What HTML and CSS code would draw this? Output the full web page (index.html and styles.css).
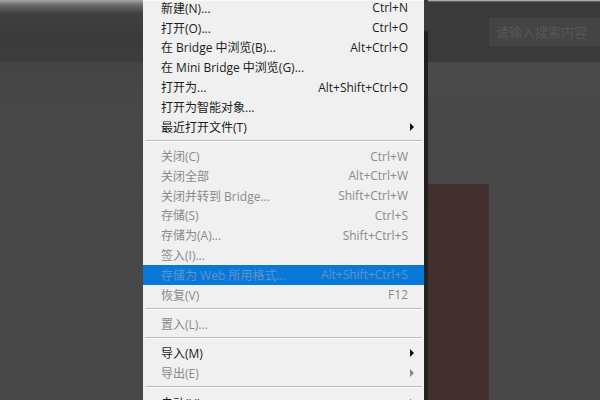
FILE: index.html
```html
<!DOCTYPE html>
<html lang="zh-CN">
<head>
<meta charset="utf-8">
<link rel="stylesheet" href="styles.css">
</head>
<body>
<div class="screen">
  <div class="left-pane">
    <div class="left-top"></div>
    <div class="left-rest"></div>
  </div>
  <div class="menu">
    <div class="menu-list">
      <div class="item"><span class="label">新建(N)...</span><span class="key">Ctrl+N</span></div>
      <div class="item"><span class="label">打开(O)...</span><span class="key">Ctrl+O</span></div>
      <div class="item"><span class="label">在 Bridge 中浏览(B)...</span><span class="key">Alt+Ctrl+O</span></div>
      <div class="item"><span class="label">在 Mini Bridge 中浏览(G)...</span><span class="key"></span></div>
      <div class="item"><span class="label">打开为...</span><span class="key">Alt+Shift+Ctrl+O</span></div>
      <div class="item"><span class="label">打开为智能对象...</span><span class="key"></span></div>
      <div class="item"><span class="label">最近打开文件(T)</span><span class="arrow"></span></div>
      <div class="sep"></div>
      <div class="item off"><span class="label">关闭(C)</span><span class="key">Ctrl+W</span></div>
      <div class="item off"><span class="label">关闭全部</span><span class="key">Alt+Ctrl+W</span></div>
      <div class="item off"><span class="label">关闭并转到 Bridge...</span><span class="key">Shift+Ctrl+W</span></div>
      <div class="item off"><span class="label">存储(S)</span><span class="key">Ctrl+S</span></div>
      <div class="item off"><span class="label">存储为(A)...</span><span class="key">Shift+Ctrl+S</span></div>
      <div class="item off"><span class="label">签入(I)...</span><span class="key"></span></div>
      <div class="item hl"><span class="label">存储为 Web 所用格式...</span><span class="key">Alt+Shift+Ctrl+S</span></div>
      <div class="item off"><span class="label">恢复(V)</span><span class="key">F12</span></div>
      <div class="sep"></div>
      <div class="item off"><span class="label">置入(L)...</span><span class="key"></span></div>
      <div class="sep"></div>
      <div class="item"><span class="label">导入(M)</span><span class="arrow"></span></div>
      <div class="item off"><span class="label">导出(E)</span><span class="arrow"></span></div>
      <div class="sep"></div>
      <div class="item"><span class="label">自动(U)</span><span class="arrow"></span></div>
    </div>
  </div>
  <div class="shadow-line"></div>
  <div class="right-pane">
    <div class="top-bar">
      <div class="search">请输入搜索内容</div>
    </div>
    <div class="sub-bar"></div>
    <div class="canvas-area">
      <div class="doc"></div>
    </div>
  </div>
</div>
</body>
</html>
```

FILE: styles.css
```css
html, body {
  margin: 0;
  padding: 0;
}
body {
  width: 600px;
  height: 400px;
  overflow: hidden;
  background: #474747;
  font-family: "Open Sans", "Noto Sans CJK SC", sans-serif;
}
.screen {
  display: flex;
  width: 600px;
  height: 400px;
  overflow: hidden;
}
.left-pane {
  width: 143px;
  flex: none;
  display: flex;
  flex-direction: column;
}
.left-top {
  height: 62px;
  background: linear-gradient(#a5a5a5 0px, #6a6a6a 5px, #3f3f3f 14px, #3a3a3a 40px, #3d3d3d 62px);
}
.left-rest {
  flex: 1;
  background: linear-gradient(#444 0px, #474747 40px, #484848 100%);
}
.menu {
  width: 281px;
  flex: none;
  background: #f0f0f0;
  border-top: 1px solid #fafafa;
  box-sizing: border-box;
  overflow: hidden;
}
.menu-list {
  margin-top: -3px;
}
.item {
  height: 19.8px;
  display: flex;
  align-items: center;
  padding: 0 16px 0 18px;
  font-size: 12px;
  color: #1c1c1c;
  position: relative;
}
.item.off {
  color: #8a8a8a;
}
.item.hl {
  background: #0a78d6;
  color: #5d96cf;
}
.label {
  flex: 1;
  white-space: nowrap;
}
.key {
  font-size: 12px;
  white-space: nowrap;
}
.arrow {
  width: 0;
  height: 0;
  border-top: 4px solid transparent;
  border-bottom: 4px solid transparent;
  border-left: 4px solid #111;
  margin-right: -6px;
}
.item.off .arrow {
  border-left-color: #8a8a8a;
}
.sep {
  height: 9.6px;
  box-sizing: border-box;
  padding-top: 3px;
  margin: 0 2px;
}
.sep::before {
  content: "";
  display: block;
  height: 1px;
  background: #bdbdbd;
  border-bottom: 1px solid #fbfbfb;
}
.shadow-line {
  width: 4px;
  flex: none;
  background: linear-gradient(#3a3a3a 0px, #3a3a3a 30px, #1e1e1e 32px, #232323 100%);
}
.right-pane {
  flex: 1;
  display: flex;
  flex-direction: column;
}
.top-bar {
  height: 62px;
  background: linear-gradient(#d0d0d0 0px, #3a3a3a 2px, #3a3a3a 100%);
  padding-top: 18px;
  box-sizing: border-box;
  padding-left: 61px;
}
.search {
  height: 28px;
  background: #444;
  color: #575757;
  font-size: 13px;
  font-family: "Noto Sans CJK SC", sans-serif;
  line-height: 28px;
  padding-left: 7px;
  white-space: nowrap;
  overflow: hidden;
}
.sub-bar {
  height: 34px;
  background: #4a4a4a;
}
.canvas-area {
  flex: 1;
  background: #484848;
  padding-top: 88px;
}
.doc {
  width: 61px;
  height: 100%;
  background: #42302f;
}
```
